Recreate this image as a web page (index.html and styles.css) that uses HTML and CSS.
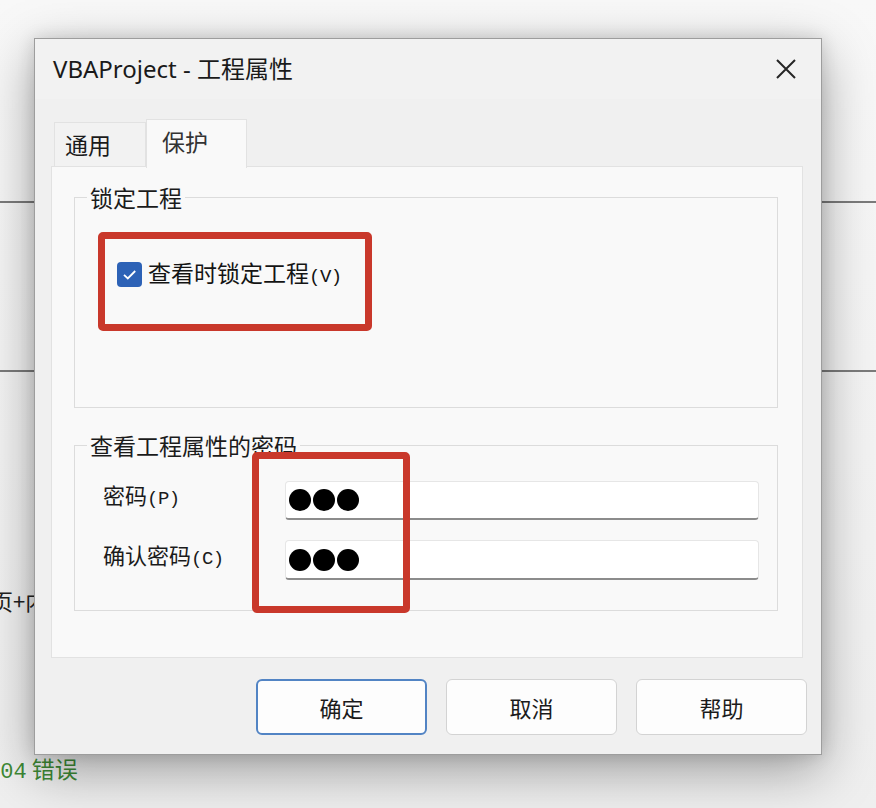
FILE: index.html
```html
<!DOCTYPE html>
<html>
<head>
	<title>VBAProject - 工程属性</title>
	<link rel="stylesheet" href="styles.css">
</head>
<body>
	<div class="backdrop">
		<div class="rule rule-top"></div>
		<div class="rule rule-mid"></div>
		<p class="bg-text">页+内</p>
		<p class="bg-status"><span class="code">404</span> 错误</p>
	</div>

	<div class="dialog">
		<div class="titlebar">
			<span class="title">VBAProject - 工程属性</span>
			<svg class="close" width="22" height="22" viewBox="0 0 22 22">
				<path d="M2 2 L20 20 M20 2 L2 20" stroke="#262626" stroke-width="2" fill="none"/>
			</svg>
		</div>

		<div class="tabs">
			<div class="tab">通用</div>
			<div class="tab active">保护</div>
		</div>

		<div class="panel">
			<fieldset class="group group-lock">
				<legend>锁定工程</legend>
				<label class="check-row">
					<svg class="checkbox" width="25" height="25" viewBox="0 0 25 25">
						<rect x="0" y="0" width="25" height="25" rx="4" fill="#2d62b6"/>
						<path d="M7 12.8 L10.8 16.4 L18.2 9" stroke="#fff" stroke-width="1.8" fill="none"/>
					</svg>
					<span>查看时锁定工程<span class="key">(V)</span></span>
				</label>
			</fieldset>

			<fieldset class="group group-pass">
				<legend>查看工程属性的密码</legend>
				<div class="fields">
					<span class="field-label">密码<span class="key">(P)</span></span>
					<div class="input"><span class="dot"></span><span class="dot"></span><span class="dot"></span></div>
					<span class="field-label">确认密码<span class="key">(C)</span></span>
					<div class="input"><span class="dot"></span><span class="dot"></span><span class="dot"></span></div>
				</div>
			</fieldset>
		</div>

		<div class="buttons">
			<button class="btn default">确定</button>
			<button class="btn">取消</button>
			<button class="btn">帮助</button>
		</div>

		<!-- red annotation marks -->
		<div class="mark mark-check"></div>
		<div class="mark mark-pass"></div>
	</div>
</body>
</html>
```

FILE: styles.css
```css
body {
	margin: 0;
	padding: 0;
	width: 876px;
	height: 808px;
	overflow: hidden;
	position: relative;
	background: #f4f4f4;
	font-family: 'Noto Sans', 'Noto Sans CJK SC', sans-serif;
	color: #1b1b1b;
}
.backdrop {
	height: 808px;
	overflow: hidden;
	background: linear-gradient(#f8f8f8, #efefef);
}
.rule {
	height: 2px;
	background: #7b7b7b;
}
.rule-top {
	margin-top: 201px;
}
.rule-mid {
	margin-top: 167px;
}
.bg-text {
	margin: 214px 0 0 -9px;
	font-size: 22px;
	line-height: 28px;
	font-family: 'Noto Sans CJK SC', sans-serif;
	color: #222;
}
.bg-status {
	margin: 140px 0 0 -13px;
	font-size: 23px;
	line-height: 28px;
	color: #3e8a36;
	font-family: 'Noto Sans CJK SC', sans-serif;
}
.bg-status .code {
	font-family: 'Liberation Mono', monospace;
	font-size: 22px;
}

/* dialog */
.dialog {
	position: absolute;
	left: 34px;
	top: 38px;
	width: 788px;
	height: 717px;
	box-sizing: border-box;
	border: 1px solid #9d9d9d;
	background: #f0f0f0;
	box-shadow: 0 16px 50px rgba(0,0,0,0.34), 0 0 16px rgba(0,0,0,0.14);
	padding: 0 15px 0 16px;
	display: flex;
	flex-direction: column;
}
.titlebar {
	height: 60px;
	margin: 0 -15px 0 -16px;
	padding: 0 24px 0 18px;
	display: flex;
	align-items: center;
	justify-content: space-between;
	background: #f2f2f2;
}
.title {
	font-size: 24px;
	line-height: 30px;
	color: #1a1a1a;
}
.close {
	display: block;
}
.tabs {
	margin-top: 20px;
	height: 47px;
	padding-left: 3px;
	display: flex;
	align-items: flex-end;
	position: relative;
	z-index: 1;
}
.tab {
	width: 92px;
	height: 44px;
	box-sizing: border-box;
	padding-left: 10px;
	border: 1px solid #e2e2e2;
	border-bottom: none;
	background: #f2f2f2;
	font-family: 'Noto Sans CJK SC', sans-serif;
	font-size: 23px;
	line-height: 42px;
	color: #1b1b1b;
}
.tab.active {
	width: 101px;
	height: 49px;
	margin-bottom: -2px;
	padding-left: 15px;
	line-height: 42px;
	background: #f9f9f9;
	color: #333;
}
.panel {
	height: 492px;
	margin-right: 3px;
	box-sizing: border-box;
	border: 1px solid #e2e2e2;
	background: #f9f9f9;
	padding: 17px 24px 0 22px;
}
.group {
	margin: 0;
	padding: 0 18px 0 12px;
	min-inline-size: 0;
	border: 1px solid #dcdcdc;
	font-family: 'Noto Sans CJK SC', sans-serif;
}
.group legend {
	padding: 0 3px;
	font-size: 23px;
	line-height: 26px;
	color: #1b1b1b;
}
.group-lock {
	height: 224px;
	box-sizing: border-box;
}
.check-row {
	margin: 48px 0 0 30px;
	display: flex;
	align-items: center;
	gap: 6px;
	font-size: 23px;
	line-height: 28px;
	color: #141414;
}
.checkbox {
	display: block;
}
.key {
	font-family: 'Liberation Mono', monospace;
	font-size: 19px;
	letter-spacing: -0.5px;
}
.group-pass {
	margin-top: 24px;
	padding-bottom: 30px;
}
.fields {
	margin-top: 23px;
	padding-left: 16px;
	display: grid;
	grid-template-columns: 182px 1fr;
	row-gap: 20px;
	align-items: center;
}
.field-label {
	font-size: 22px;
	line-height: 28px;
	color: #1b1b1b;
	position: relative;
	top: -4px;
}
.input {
	height: 39px;
	box-sizing: border-box;
	background: #fff;
	border: 1px solid #e6e6e6;
	border-bottom: 2px solid #8c8c8c;
	border-radius: 4px;
	padding-left: 3px;
	display: flex;
	align-items: center;
}
.input:last-child {
	height: 40px;
}
.dot {
	width: 22px;
	height: 22px;
	margin-right: 2px;
	border-radius: 50%;
	background: #000;
}
.buttons {
	margin: 21px -1px 0 0;
	display: flex;
	justify-content: flex-end;
	gap: 19px;
}
.btn {
	width: 171px;
	height: 56px;
	box-sizing: border-box;
	background: #fdfdfd;
	border: 1px solid #d3d3d3;
	border-radius: 6px;
	font-family: 'Noto Sans CJK SC', sans-serif;
	font-size: 22px;
	color: #1b1b1b;
	padding: 0;
}
.btn.default {
	border: 2px solid #5284c4;
}
.mark {
	position: absolute;
	border: 7px solid #c9382b;
	border-radius: 5px;
	box-sizing: border-box;
}
.mark-check {
	left: 63px;
	top: 193px;
	width: 274px;
	height: 99px;
}
.mark-pass {
	left: 217px;
	top: 413px;
	width: 158px;
	height: 161px;
}
```
